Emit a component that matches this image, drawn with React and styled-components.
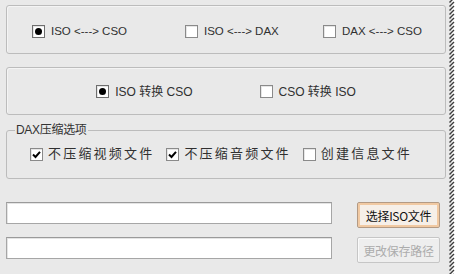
import React from "react";
import styled, { createGlobalStyle } from "styled-components";

const GlobalStyle = createGlobalStyle`
  html, body {
    margin: 0;
    padding: 0;
    background: #ffffff;
  }
  body {
    font-family: "Liberation Sans", "Noto Sans CJK SC", sans-serif;
    font-size: 12px;
    color: #222;
  }
`;

const Page = styled.div`
  display: flex;
  width: 461px;
  height: 274px;
  overflow: hidden;
`;

const Panel = styled.div`
  width: 448px;
  flex-shrink: 0;
  background: #e9e9e9;
  padding: 5px 2px 0 6px;
  box-sizing: border-box;
  display: flex;
  flex-direction: column;
`;

const Group = styled.div`
  height: ${(p) => p.$h}px;
  margin-top: ${(p) => p.$mt || 0}px;
  border: 1px solid #bcbcbc;
  border-radius: 3px;
  box-shadow: inset 1px 1px 0 #f4f4f4;
  box-sizing: border-box;
  display: flex;
  align-items: center;
`;

const ModeGrid = styled.div`
  display: grid;
  grid-template-columns: 153px 138px auto;
  padding: 3px 0 0 25px;
`;

const ConvertRow = styled.div`
  flex: 1;
  display: flex;
  justify-content: center;
  gap: 67px;
  padding-top: 1px;
`;

const Option = styled.label`
  display: flex;
  align-items: center;
  gap: ${(p) => p.$gap || 6}px;
  white-space: nowrap;
  font-size: ${(p) => p.$size || 11.5}px;
  letter-spacing: ${(p) => p.$ls || 0}px;
  color: #303030;
  line-height: 16px;
`;

const Box = styled.span`
  width: 13px;
  height: 13px;
  box-sizing: border-box;
  border: 1px solid ${(p) => (p.$radio ? "#6e6e6e" : "#8a8a8a")};
  background: #ffffff;
  box-shadow: inset 1px 1px 0 #e6e6e6;
  display: flex;
  align-items: center;
  justify-content: center;
  flex-shrink: 0;
`;

const Dot = styled.span`
  width: 7px;
  height: 7px;
  border-radius: 50%;
  background: #000;
`;

const Fieldset = styled.fieldset`
  margin: 8px 0 0 0;
  padding: 0;
  height: 56px;
  box-sizing: border-box;
  border: 1px solid #bcbcbc;
  border-radius: 3px;
  min-width: 0;
`;

const Legend = styled.legend`
  margin-left: 8px;
  padding: 0 1px;
  font-size: 12px;
  line-height: 14px;
  color: #333;
  letter-spacing: -0.3px;
  font-family: "Liberation Sans", "Noto Sans CJK SC", sans-serif;
`;

const CheckRow = styled.div`
  display: flex;
  align-items: center;
  gap: 12px;
  padding: 9px 0 0 23px;
`;

const Bottom = styled.div`
  margin-top: 23px;
  display: grid;
  grid-template-columns: 326px 83px;
  column-gap: 25px;
  row-gap: 9px;
  align-items: start;
`;

const TextBox = styled.input`
  height: 22px;
  box-sizing: border-box;
  border: 1px solid #a6a6a6;
  border-top-color: #9a9a9a;
  box-shadow: inset 1px 1px 0 #e4e4e4;
  background: #ffffff;
  outline: none;
  padding: 0 3px;
  margin: 0;
`;

const Button = styled.button`
  height: 26px;
  width: 83px;
  margin: 0;
  padding: 0;
  box-sizing: border-box;
  border-radius: 2px;
  font-family: "Noto Sans CJK SC", "Liberation Sans", sans-serif;
  font-size: 12px;
  border: 1px solid ${(p) => (p.disabled ? "#c6c6c6" : "#b39a84")};
  background: ${(p) => (p.disabled ? "#eeeeee" : "#f6efe8")};
  box-shadow: ${(p) =>
    p.disabled ? "inset 1px 1px 0 #fafafa" : "inset 0 0 0 2px #f1c9a2"};
  color: ${(p) => (p.disabled ? "#acacac" : "#111")};
  letter-spacing: -0.3px;
`;

const Torn = styled.svg`
  display: block;
  flex-shrink: 0;
`;

function Radio({ checked }) {
  return <Box $radio>{checked && <Dot />}</Box>;
}

function Check({ checked }) {
  return (
    <Box>
      {checked && (
        <svg width="9" height="9" viewBox="0 0 9 9">
          <path d="M1 4.5 L3.5 7 L8 1.8" fill="none" stroke="#000" strokeWidth="2" />
        </svg>
      )}
    </Box>
  );
}

function TornEdge() {
  const marks = [];
  for (let y = -2; y < 276; y += 4) {
    marks.push(`M1.5 ${y + 4.5} L6 ${y}`);
  }
  const edge = [];
  for (let y = -2; y < 276; y += 4) {
    edge.push(`${5} ${y + 0.5}`, `${2.5} ${y + 3.5}`);
  }
  return (
    <Torn width="13" height="274" viewBox="0 0 13 274">
      <rect x="0" y="0" width="13" height="274" fill="#ffffff" />
      <polygon points={`0 0 ${edge.join(" ")} 0 274`} fill="#e9e9e9" />
      <path d={marks.join(" ")} stroke="#3c3c3c" strokeWidth="1.4" fill="none" />
    </Torn>
  );
}

export default function App() {
  return (
    <>
      <GlobalStyle />
      <Page>
        <Panel>
          <Group $h={49}>
            <ModeGrid>
              <Option>
                <Radio checked />
                ISO &lt;---&gt; CSO
              </Option>
              <Option>
                <Check />
                ISO &lt;---&gt; DAX
              </Option>
              <Option>
                <Check />
                DAX &lt;---&gt; CSO
              </Option>
            </ModeGrid>
          </Group>

          <Group $h={48} $mt={13}>
            <ConvertRow>
              <Option $size={12}>
                <Radio checked />
                ISO 转换 CSO
              </Option>
              <Option $size={12}>
                <Check />
                CSO 转换 ISO
              </Option>
            </ConvertRow>
          </Group>

          <Fieldset>
            <Legend>DAX压缩选项</Legend>
            <CheckRow>
              <Option $gap={5} $size={13} $ls={2.2}>
                <Check checked />
                不压缩视频文件
              </Option>
              <Option $gap={5} $size={13} $ls={2.2}>
                <Check checked />
                不压缩音频文件
              </Option>
              <Option $gap={5} $size={13} $ls={2.2}>
                <Check />
                创建信息文件
              </Option>
            </CheckRow>
          </Fieldset>

          <Bottom>
            <TextBox type="text" />
            <Button>选择ISO文件</Button>
            <TextBox type="text" />
            <Button disabled>更改保存路径</Button>
          </Bottom>
        </Panel>
        <TornEdge />
      </Page>
    </>
  );
}
